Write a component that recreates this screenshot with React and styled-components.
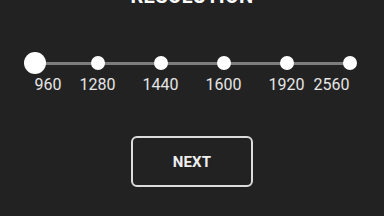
import React, { useState } from 'react';
import styled, { createGlobalStyle } from 'styled-components';

const GlobalStyle = createGlobalStyle`
  html, body {
    margin: 0;
    padding: 0;
    background-color: #222222;
  }
  body {
    font-family: Roboto, "Liberation Sans", sans-serif;
    overflow: hidden;
  }
`;

const Screen = styled.div`
  width: 384px;
  height: 216px;
  background-color: #222222;
  display: flex;
  flex-direction: column;
  align-items: center;
  overflow: hidden;
`;

const Title = styled.h1`
  margin: -14px 0 0;
  font-size: 20px;
  line-height: 20px;
  font-weight: 700;
  color: #ffffff;
  letter-spacing: 0.3px;
`;

const Slider = styled.div`
  margin-top: 46px;
  position: relative;
  display: grid;
  grid-template-columns: repeat(${p => p.$count}, 63px);

  &::before {
    content: '';
    position: absolute;
    left: 31.5px;
    right: 31.5px;
    top: 9.5px;
    height: 3px;
    background-color: #7d7d7d;
  }
`;

const Stop = styled.div`
  display: flex;
  flex-direction: column;
  align-items: stretch;
  cursor: pointer;
`;

const DotArea = styled.div`
  height: 22px;
  display: flex;
  align-items: center;
  justify-content: center;
  position: relative;
`;

const Dot = styled.span`
  width: ${p => (p.$active ? 22 : 14)}px;
  height: ${p => (p.$active ? 22 : 14)}px;
  border-radius: 50%;
  background-color: #ffffff;
`;

const LabelRow = styled.div`
  margin-top: 3px;
  display: flex;
  justify-content: ${p => (p.$edge === 'start' ? 'flex-start' : p.$edge === 'end' ? 'flex-end' : 'center')};
  padding-left: ${p => (p.$edge === 'start' ? 31.5 : 0)}px;
  padding-right: ${p => (p.$edge === 'end' ? 31.5 : 0)}px;
`;

const Label = styled.span`
  flex-shrink: 0;
  white-space: nowrap;
  font-size: 16px;
  line-height: 16px;
  color: #e6e6e6;
`;

const NextButton = styled.button`
  margin-top: 43px;
  width: 122px;
  height: 51px;
  box-sizing: border-box;
  border: 2px solid #dcdcdc;
  border-radius: 6px;
  background-color: #222222;
  color: #eeeeee;
  font-family: Roboto, "Liberation Sans", sans-serif;
  font-size: 15px;
  font-weight: 700;
  letter-spacing: 0.2px;
  cursor: pointer;
`;

const resolutions = [960, 1280, 1440, 1600, 1920, 2560];

export default function App() {
  const [selected, setSelected] = useState(0);

  return (
    <>
      <GlobalStyle />
      <Screen>
        <Title>RESOLUTION</Title>
        <Slider $count={resolutions.length}>
          {resolutions.map((r, i) => (
            <Stop key={r} onClick={() => setSelected(i)}>
              <DotArea>
                <Dot $active={i === selected} />
              </DotArea>
              <LabelRow $edge={i === 0 ? 'start' : i === resolutions.length - 1 ? 'end' : 'middle'}>
                <Label>{r}</Label>
              </LabelRow>
            </Stop>
          ))}
        </Slider>
        <NextButton>NEXT</NextButton>
      </Screen>
    </>
  );
}
